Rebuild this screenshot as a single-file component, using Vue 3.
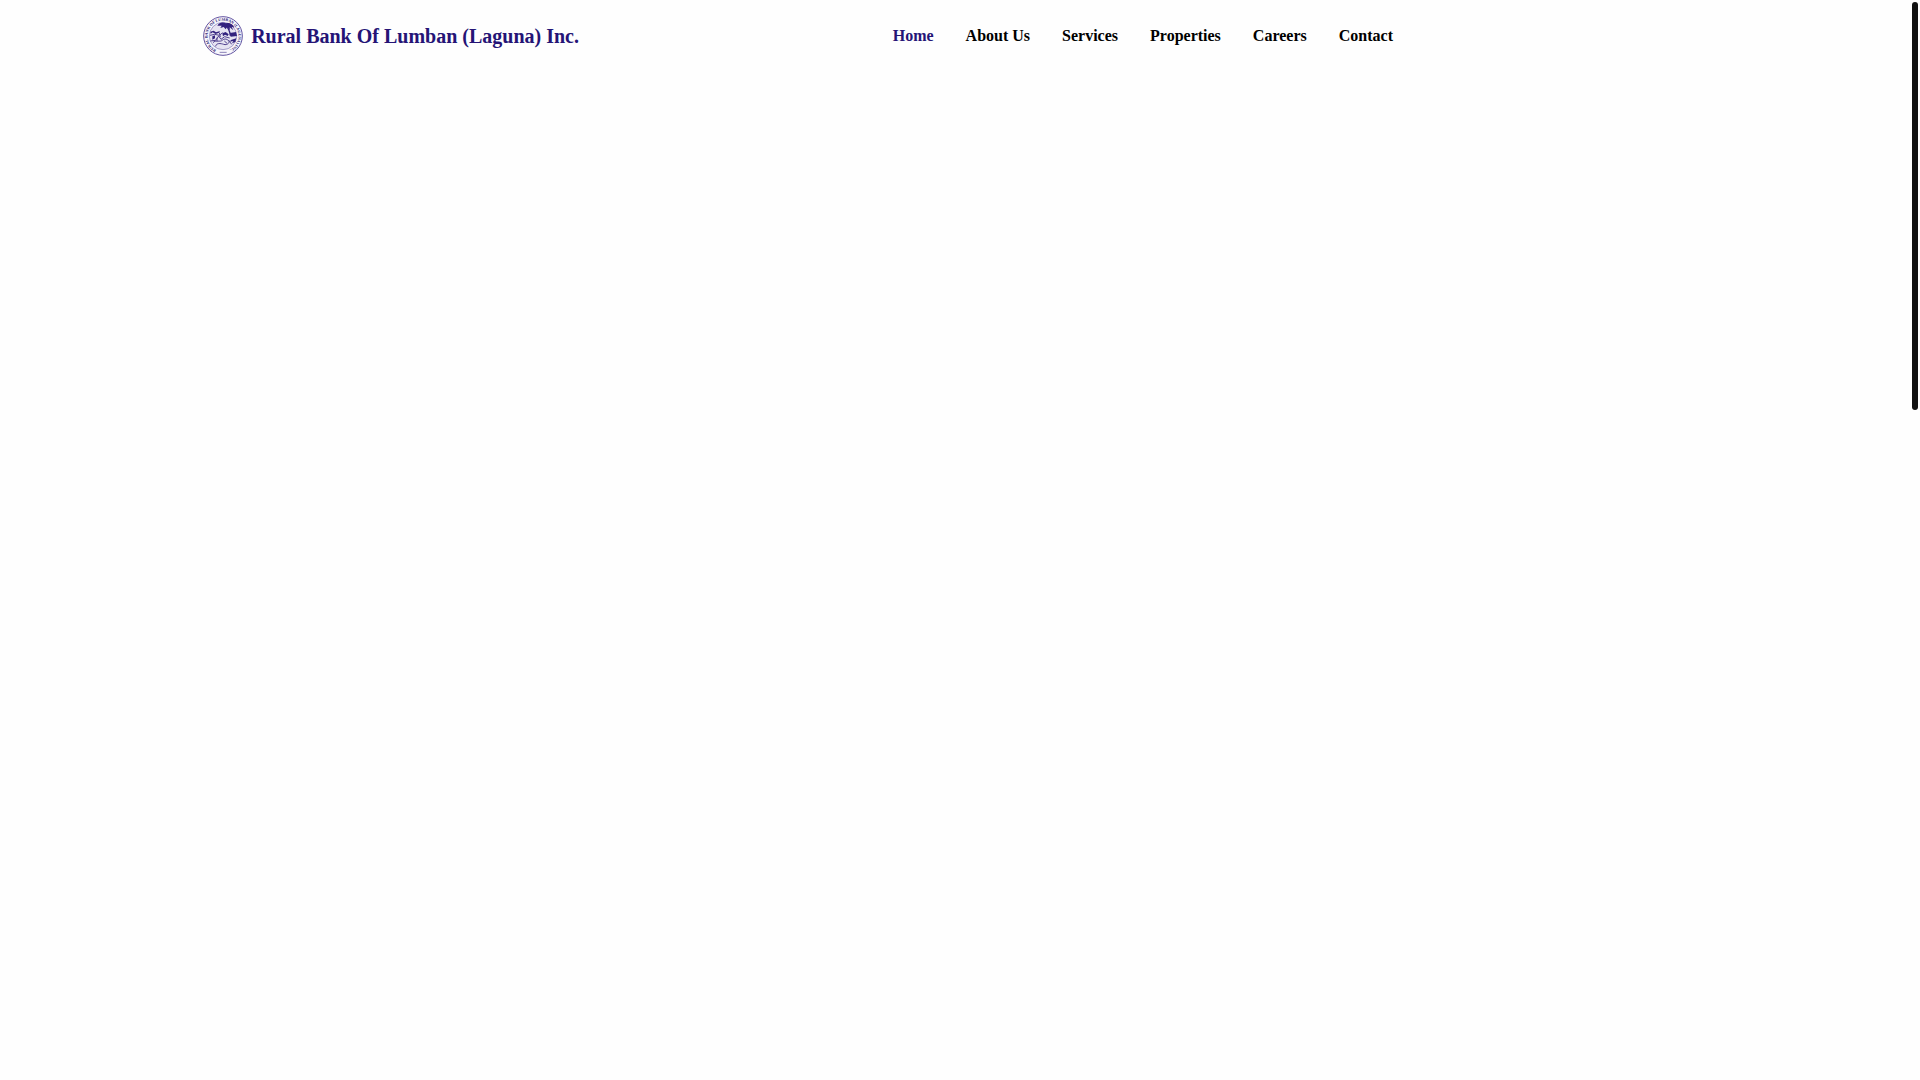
<template>
  <header class="header">
    <a href="#" class="brand">
      <svg class="seal" viewBox="0 0 120 120" aria-hidden="true">
        <defs>
          <path id="seal-arc" d="M50 105 A46 46 0 1 1 70 105" />
        </defs>
        <circle cx="60" cy="60" r="58" fill="#f8f7fc" stroke="#6253a0" stroke-width="3" />
        <circle cx="60" cy="60" r="41" fill="#e6e3f2" stroke="#8277b3" stroke-width="2" />
        <text class="seal-text" text-anchor="middle">
          <textPath href="#seal-arc" startOffset="50%">RURAL BANK OF LUMBAN (LAGUNA) INC.</textPath>
        </text>
        <g fill="#33227e">
          <path d="M43 29 C49 17 62 18 69 22 C78 18 91 25 94 35 L86 32 L91 43 L80 34 L81 43 L72 34 L68 40 L62 33 L52 36 L56 29 Z" />
          <path d="M72 31 C79 39 83 48 85 59 L80 59 C79 48 75 39 70 34 Z" />
          <path d="M80 51 L99 48 L102 60 L83 62 Z" />
          <path d="M84 72 L100 67 L97 78 L87 82 L91 75 L80 77 Z" />
          <path d="M22 47 L32 44 L39 49 L51 45 L48 50 L38 54 L29 49 L23 53 Z" />
          <path d="M28 61 L36 58 L36 67 L28 71 Z" />
          <path d="M58 52 L68 48 L77 55 L74 60 L66 56 L60 61 Z" />
        </g>
        <g fill="none" stroke="#51418f" stroke-width="3">
          <path d="M21 58 L35 55 L49 58 L59 50" />
          <path d="M22 75 L38 73 L47 60 L54 70 L65 62 L80 66" />
          <path d="M30 80 C38 70 51 80 59 72 C68 64 78 73 86 85" />
          <path d="M38 91 C40 80 53 82 62 85 C73 89 82 79 77 72" />
          <path d="M42 65 L42 77 M49 50 L52 63 M64 75 L72 82" />
        </g>
        <path d="M50 109 H71" stroke="#8a80b6" stroke-width="3" />
      </svg>
      <span class="brand-name">Rural Bank Of Lumban (Laguna) Inc.</span>
    </a>
    <nav class="nav">
      <a
        v-for="link in links"
        :key="link"
        href="#"
        class="nav-link"
        :class="{ active: link === current }"
        @click.prevent="current = link"
      >{{ link }}</a>
    </nav>
  </header>
  <div class="scroll-thumb" aria-hidden="true"></div>
</template>

<script setup>
import { ref } from 'vue'

const links = ['Home', 'About Us', 'Services', 'Properties', 'Careers', 'Contact']
const current = ref('Home')
</script>

<style>
body { background: #fefefe; font-family: "Liberation Serif", "Times New Roman", serif; }
</style>

<style scoped>
.header { display: flex; align-items: center; padding: 16px 27.45% 16px 10.58%; }
.brand { display: flex; align-items: center; gap: 8px; color: #251476; text-decoration: none; }
.seal { width: 40px; height: 40px; flex: none; }
.seal-text { font-size: 12px; font-weight: 700; fill: #22116f; }
.brand-name { font-size: 20px; line-height: 28px; font-weight: 700; white-space: nowrap; }
.nav { display: flex; gap: 32px; margin-left: auto; }
.nav-link { color: #000; font-size: 16px; line-height: 24px; font-weight: 700; text-decoration: none; white-space: nowrap; }
.nav-link.active { color: #251476; }
.scroll-thumb { position: fixed; top: 2px; right: 2px; width: 6px; height: calc(38% - 2px); border-radius: 3px; background: #111; }
</style>
